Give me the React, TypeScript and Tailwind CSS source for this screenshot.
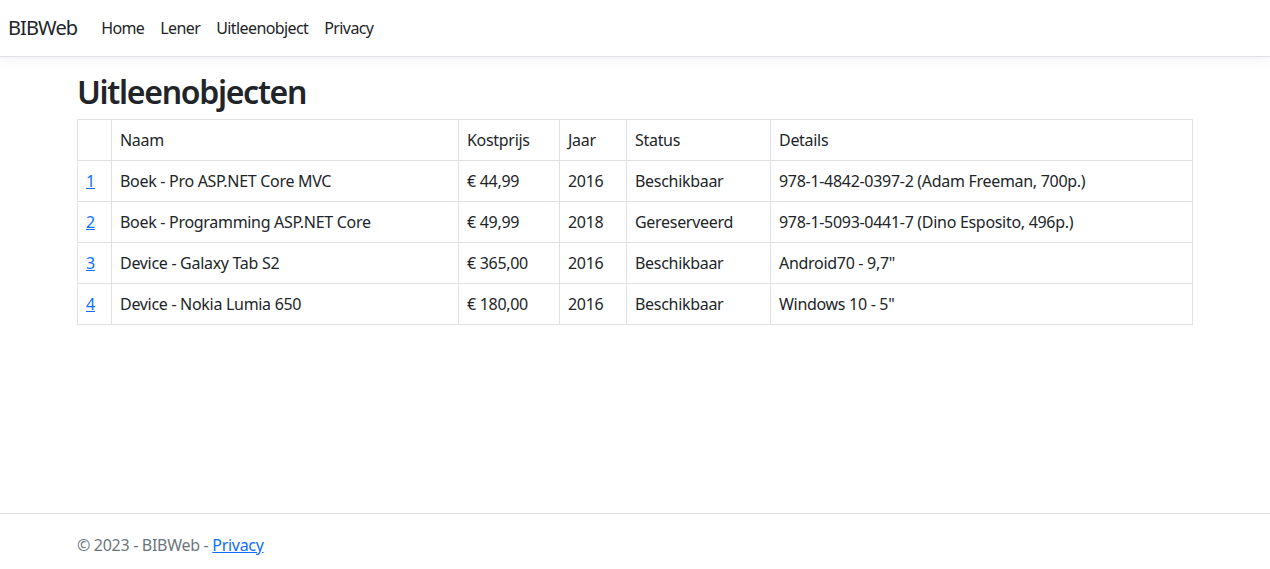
import React from 'react';

const rows = [
  { id: 1, naam: 'Boek - Pro ASP.NET Core MVC', prijs: '€ 44,99', jaar: '2016', status: 'Beschikbaar', details: '978-1-4842-0397-2 (Adam Freeman, 700p.)' },
  { id: 2, naam: 'Boek - Programming ASP.NET Core', prijs: '€ 49,99', jaar: '2018', status: 'Gereserveerd', details: '978-1-5093-0441-7 (Dino Esposito, 496p.)' },
  { id: 3, naam: 'Device - Galaxy Tab S2', prijs: '€ 365,00', jaar: '2016', status: 'Beschikbaar', details: 'Android70 - 9,7"' },
  { id: 4, naam: 'Device - Nokia Lumia 650', prijs: '€ 180,00', jaar: '2016', status: 'Beschikbaar', details: 'Windows 10 - 5"' },
];

const cell = 'border border-[#dee2e6] px-2 py-2 h-[41px] align-middle font-normal text-left';

export default function App() {
  return (
    <div
      className="flex min-h-screen flex-col bg-white text-[16px] leading-6 tracking-[-0.3px] text-[#212529]"
      style={{ fontFamily: '"Noto Sans", "Open Sans", sans-serif' }}
    >
      {/* Navbar */}
      <nav className="flex h-[57px] items-center border-b border-[#dee2e6] bg-white px-2 shadow-[0_4px_12px_rgba(0,0,0,0.05)]">
        <a className="mr-4 text-[20px] leading-[30px] tracking-[-0.9px]">BIBWeb</a>
        <ul className="flex tracking-[-0.6px]">
          {['Home', 'Lener', 'Uitleenobject', 'Privacy'].map((l) => (
            <li key={l}>
              <a className="block px-2 py-2">{l}</a>
            </li>
          ))}
        </ul>
      </nav>

      {/* Content */}
      <main className="flex-1 pt-4">
        <div className="mx-auto w-[1140px] px-3">
          <h1 className="mb-2 text-[32px] font-semibold leading-[38px] tracking-[-1.3px]">Uitleenobjecten</h1>
          <table className="w-full border-collapse">
            <thead>
              <tr>
                <th className={`${cell} w-[34px]`}></th>
                <th className={`${cell} w-[347px]`}>Naam</th>
                <th className={`${cell} w-[101px]`}>Kostprijs</th>
                <th className={`${cell} w-[67px]`}>Jaar</th>
                <th className={`${cell} w-[144px]`}>Status</th>
                <th className={cell}>Details</th>
              </tr>
            </thead>
            <tbody>
              {rows.map((r) => (
                <tr key={r.id}>
                  <td className={cell}>
                    <a className="text-[#0d6efd] underline">{r.id}</a>
                  </td>
                  <td className={cell}>{r.naam}</td>
                  <td className={cell}>{r.prijs}</td>
                  <td className={cell}>{r.jaar}</td>
                  <td className={cell}>{r.status}</td>
                  <td className={cell}>{r.details}</td>
                </tr>
              ))}
            </tbody>
          </table>
        </div>
      </main>

      {/* Footer */}
      <footer className="h-[56px] border-t border-[#dee2e6] pt-[19px] text-[#6c757d]">
        <div className="mx-auto w-[1140px] px-3">
          © 2023 - BIBWeb - <a className="text-[#0d6efd] underline">Privacy</a>
        </div>
      </footer>
    </div>
  );
}
